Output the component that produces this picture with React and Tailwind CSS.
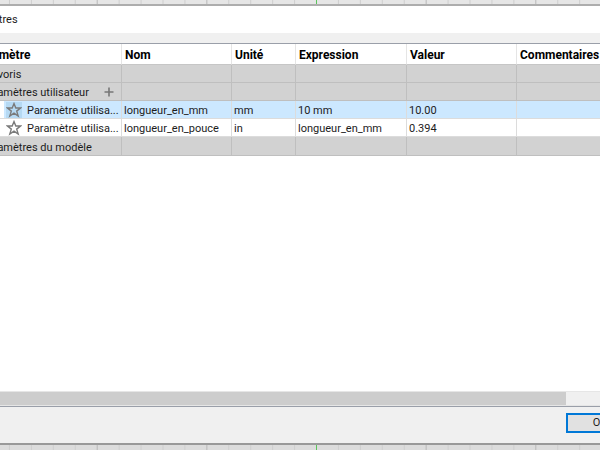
import { useState } from "react";
import clsx from "clsx";

const COLUMNS = ["Paramètre", "Nom", "Unité", "Expression", "Valeur", "Commentaires"];

const PARAMS = [
  { nom: "longueur_en_mm", unite: "mm", expression: "10 mm", valeur: "10.00" },
  { nom: "longueur_en_pouce", unite: "in", expression: "longueur_en_mm", valeur: "0.394" },
];

// sketch grid visible behind the dialog, origin axis in green
const CanvasGrid = () => {
  const lines = Array.from({ length: 120 }, (_, i) => i - 14);
  return (
    <svg className="block h-full w-full" aria-hidden="true">
      {lines.map((n) => (
        <rect
          key={n}
          x={316 + n * 21.93}
          y="0"
          width="1"
          height="100%"
          fill={n === 0 ? "#5cc55c" : n % 5 === 0 ? "#b8b8b8" : "#cfcfcf"}
        />
      ))}
    </svg>
  );
};

const StarIcon = () => (
  <svg viewBox="0 0 16 16" className="h-4 w-4" fill="none" stroke="#7a7a7a" strokeWidth="1.4" strokeLinejoin="miter">
    <path d="M8 1.6 9.8 6h4.7l-3.8 3.1 1.5 4.9L8 11.1 3.8 14l1.5-4.9L1.5 6h4.7z" />
  </svg>
);

const GroupRow = ({ label, indent = "pl-[21px]", children }) => (
  <tr className="h-[18px] bg-[#d2d2d2] last:h-[19px]">
    <th scope="row" className={clsx("border-r border-b border-[#bfbfbf] p-0 text-left font-normal", indent)}>
      <div className="flex items-center gap-[15px]">
        <span className="pt-[3px] leading-[14px]">{label}</span>
        {children}
      </div>
    </th>
    {COLUMNS.slice(1).map((c) => (
      <td key={c} className="border-r border-b border-[#bfbfbf] p-0" />
    ))}
  </tr>
);

const Cell = ({ children }) => (
  <td className="border-r border-b border-[#dcdcdc] p-0 pt-[3px] pl-0.5 leading-[14px]">{children}</td>
);

const App = () => {
  const [selected, setSelected] = useState(0);

  return (
    <div className="flex h-screen flex-col overflow-hidden bg-[#e6e6e6] font-[Roboto,'Open_Sans',sans-serif] text-[11px] leading-4 text-[#1c1c1c]">
      <div className="h-1 shrink-0">
        <CanvasGrid />
      </div>

      <div className="-mx-10 flex min-h-0 flex-1 flex-col border-t-2 border-b-2 border-t-[#adadad] border-b-[#999999] bg-[#f0f0f0]">
        <h1 className="h-[27px] shrink-0 bg-white pt-1.5 pl-px text-[11px] leading-4 font-normal">Paramètres</h1>

        {/* TABLE */}
        <div className="mt-2.5 flex min-h-0 flex-1 flex-col border-y border-[#9a9fa9] bg-white">
          <div className="min-h-0 flex-1 overflow-hidden">
            <table className="w-full table-fixed border-separate border-spacing-0">
              <colgroup>
                <col className="w-[162px]" />
                <col className="w-[110px]" />
                <col className="w-[64px]" />
                <col className="w-[111px]" />
                <col className="w-[110px]" />
                <col />
              </colgroup>
              <thead>
                <tr className="h-[21px]">
                  {COLUMNS.map((c, i) => (
                    <th
                      key={c}
                      scope="col"
                      className={clsx(
                        "border-r border-b border-r-[#e5e5e5] border-b-[#c6c6c6] p-0 pt-0.5 text-left text-[12px] leading-4 font-bold text-black",
                        i === 0 ? "pl-3.5" : "pl-[3px]"
                      )}
                    >
                      {c}
                    </th>
                  ))}
                </tr>
              </thead>
              <tbody>
                <GroupRow label="Favoris" indent="pl-[26px]" />
                <GroupRow label="Paramètres utilisateur">
                  <button type="button" aria-label="Ajouter un paramètre">
                    <svg viewBox="0 0 10 10" className="h-2.5 w-2.5" stroke="#777777" strokeWidth="1.6">
                      <path d="M5 0.5v9M0.5 5h9" />
                    </svg>
                  </button>
                </GroupRow>
                {PARAMS.map((p, i) => (
                  <tr
                    key={p.nom}
                    onClick={() => setSelected(i)}
                    className={clsx("h-[18px]", selected === i ? "bg-[#cce8ff]" : "bg-white")}
                  >
                    <td className="border-r border-b border-[#dcdcdc] bg-white p-0">
                      <div
                        className={clsx(
                          "ml-11 flex h-[17px] items-center gap-[5px] pl-0.5 whitespace-nowrap",
                          selected === i && "bg-[#cce8ff]"
                        )}
                      >
                        <button
                          type="button"
                          aria-label="Ajouter aux favoris"
                          className={clsx("h-4 w-4 shrink-0", selected === i && "bg-[#b5d9f3]")}
                        >
                          <StarIcon />
                        </button>
                        <span className="pt-[3px] leading-[14px]">Paramètre utilisa...</span>
                      </div>
                    </td>
                    <Cell>{p.nom}</Cell>
                    <Cell>{p.unite}</Cell>
                    <Cell>{p.expression}</Cell>
                    <Cell>{p.valeur}</Cell>
                    <Cell />
                  </tr>
                ))}
                <GroupRow label="Paramètres du modèle" />
              </tbody>
            </table>
          </div>

          {/* horizontal scrollbar */}
          <div className="flex h-[15px] shrink-0 border-y border-[#e6e6e6] bg-[#f0f0f0]">
            <div className="flex-1 bg-[#cdcdcd]" />
            <div className="w-[74px]" />
          </div>
        </div>

        {/* FOOTER */}
        <div className="flex h-9 shrink-0 items-start justify-end pt-1.5 pr-1.5">
          <button type="button" className="h-5 w-[68px] border-2 border-[#0078d7] bg-[#e1e1e1] text-center leading-4">
            OK
          </button>
        </div>
      </div>

      <div className="h-[5px] shrink-0 bg-[#dcdcdc]">
        <CanvasGrid />
      </div>
    </div>
  );
};

export default App;
